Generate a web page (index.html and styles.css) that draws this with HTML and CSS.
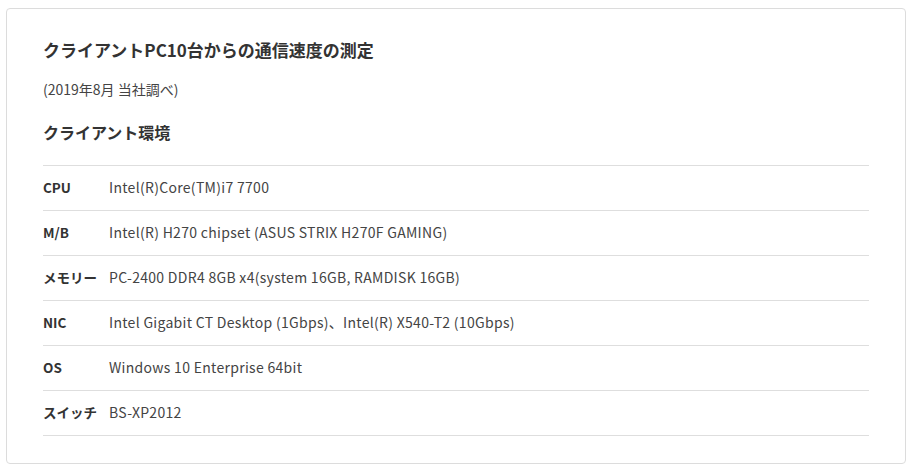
FILE: index.html
```html
<!DOCTYPE html>
<html lang="ja">
<head>
<meta charset="utf-8">
<link rel="stylesheet" href="styles.css">
</head>
<body>
<div class="card">
  <h1 class="title">クライアントPC10台からの通信速度の測定</h1>
  <p class="note">(2019年8月 当社調べ)</p>
  <h2 class="subtitle">クライアント環境</h2>
  <table class="spec">
    <tr><th>CPU</th><td>Intel(R)Core(TM)i7 7700</td></tr>
    <tr><th>M/B</th><td>Intel(R) H270 chipset (ASUS STRIX H270F GAMING)</td></tr>
    <tr><th>メモリー</th><td>PC-2400 DDR4 8GB x4(system 16GB, RAMDISK 16GB)</td></tr>
    <tr><th>NIC</th><td>Intel Gigabit CT Desktop (1Gbps)、Intel(R) X540-T2 (10Gbps)</td></tr>
    <tr><th>OS</th><td>Windows 10 Enterprise 64bit</td></tr>
    <tr><th>スイッチ</th><td>BS-XP2012</td></tr>
  </table>
</div>
</body>
</html>
```
FILE: styles.css
```css
html, body {
  margin: 0;
  padding: 0;
  background: #fff;
}
body {
  font-family: "Noto Sans CJK JP", "Noto Sans", sans-serif;
  color: #333;
}
.card {
  margin: 8px 0 0 6px;
  border: 1px solid #dcdcdc;
  border-radius: 4px;
  padding: 29px 36px 27px 36px;
  box-sizing: border-box;
  width: 900px;
}
.title {
  margin: 0;
  font-size: 17px;
  line-height: 24px;
  font-weight: 700;
  color: #333;
}
.note {
  margin: 17px 0 0;
  font-size: 14px;
  line-height: 20px;
  color: #444;
}
.subtitle {
  margin: 21px 0 0;
  font-size: 16px;
  line-height: 24px;
  font-weight: 700;
  color: #333;
}
.spec {
  margin-top: 21px;
  width: 826px;
  border-collapse: collapse;
}
.spec th, .spec td {
  border-top: 1px solid #dedede;
  border-bottom: 1px solid #dedede;
  height: 42px;
  padding: 0 0 2px;
  text-align: left;
  vertical-align: middle;
}
.spec th {
  width: 66px;
  font-size: 13.5px;
  font-weight: 700;
  color: #333;
}
.spec td {
  font-size: 14px;
  letter-spacing: 0.3px;
  color: #444;
}
```
